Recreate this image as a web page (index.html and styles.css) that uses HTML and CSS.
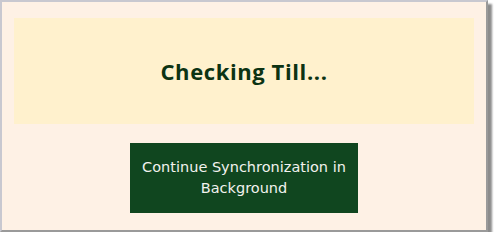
FILE: index.html
```html
<!DOCTYPE html>
<html>
<head>
<meta charset="utf-8" />
<title>Checking Till</title>
<link rel="stylesheet" href="styles.css">
</head>
<body>
<div class="dialog">
	<div class="status-panel">
		<h2 class="status-title">Checking Till...</h2>
	</div>
	<div class="actions">
		<button class="sync-button">Continue Synchronization in Background</button>
	</div>
</div>
</body>
</html>
```

FILE: styles.css
```css
body {
	margin: 0;
	background: #ffffff;
}
.dialog {
	width: 460px;
	height: 212px;
	padding: 16px 12px 0 12px;
	border: 2px solid #c8c8d0;
	border-right-color: #9a9a9a;
	border-bottom-color: #9a9a9a;
	background: #fef1e5;
	box-shadow: 4px 4px 2px #8c8c8c;
}
.status-panel {
	height: 106px;
	background: #fff1cd;
	display: flex;
	align-items: center;
	justify-content: center;
}
.status-title {
	margin: 0;
	font-family: "Open Sans", "DejaVu Sans", sans-serif;
	font-size: 22px;
	font-weight: bold;
	letter-spacing: 0.6px;
	color: #0c3313;
}
.actions {
	display: flex;
	justify-content: center;
	padding-top: 19px;
}
.sync-button {
	width: 228px;
	height: 70px;
	padding: 0 8px;
	border: 0;
	background: #10461f;
	color: #f2f2ee;
	font-family: "DejaVu Sans", Tahoma, sans-serif;
	font-size: 14.5px;
	line-height: 21px;
	text-align: center;
}
```
